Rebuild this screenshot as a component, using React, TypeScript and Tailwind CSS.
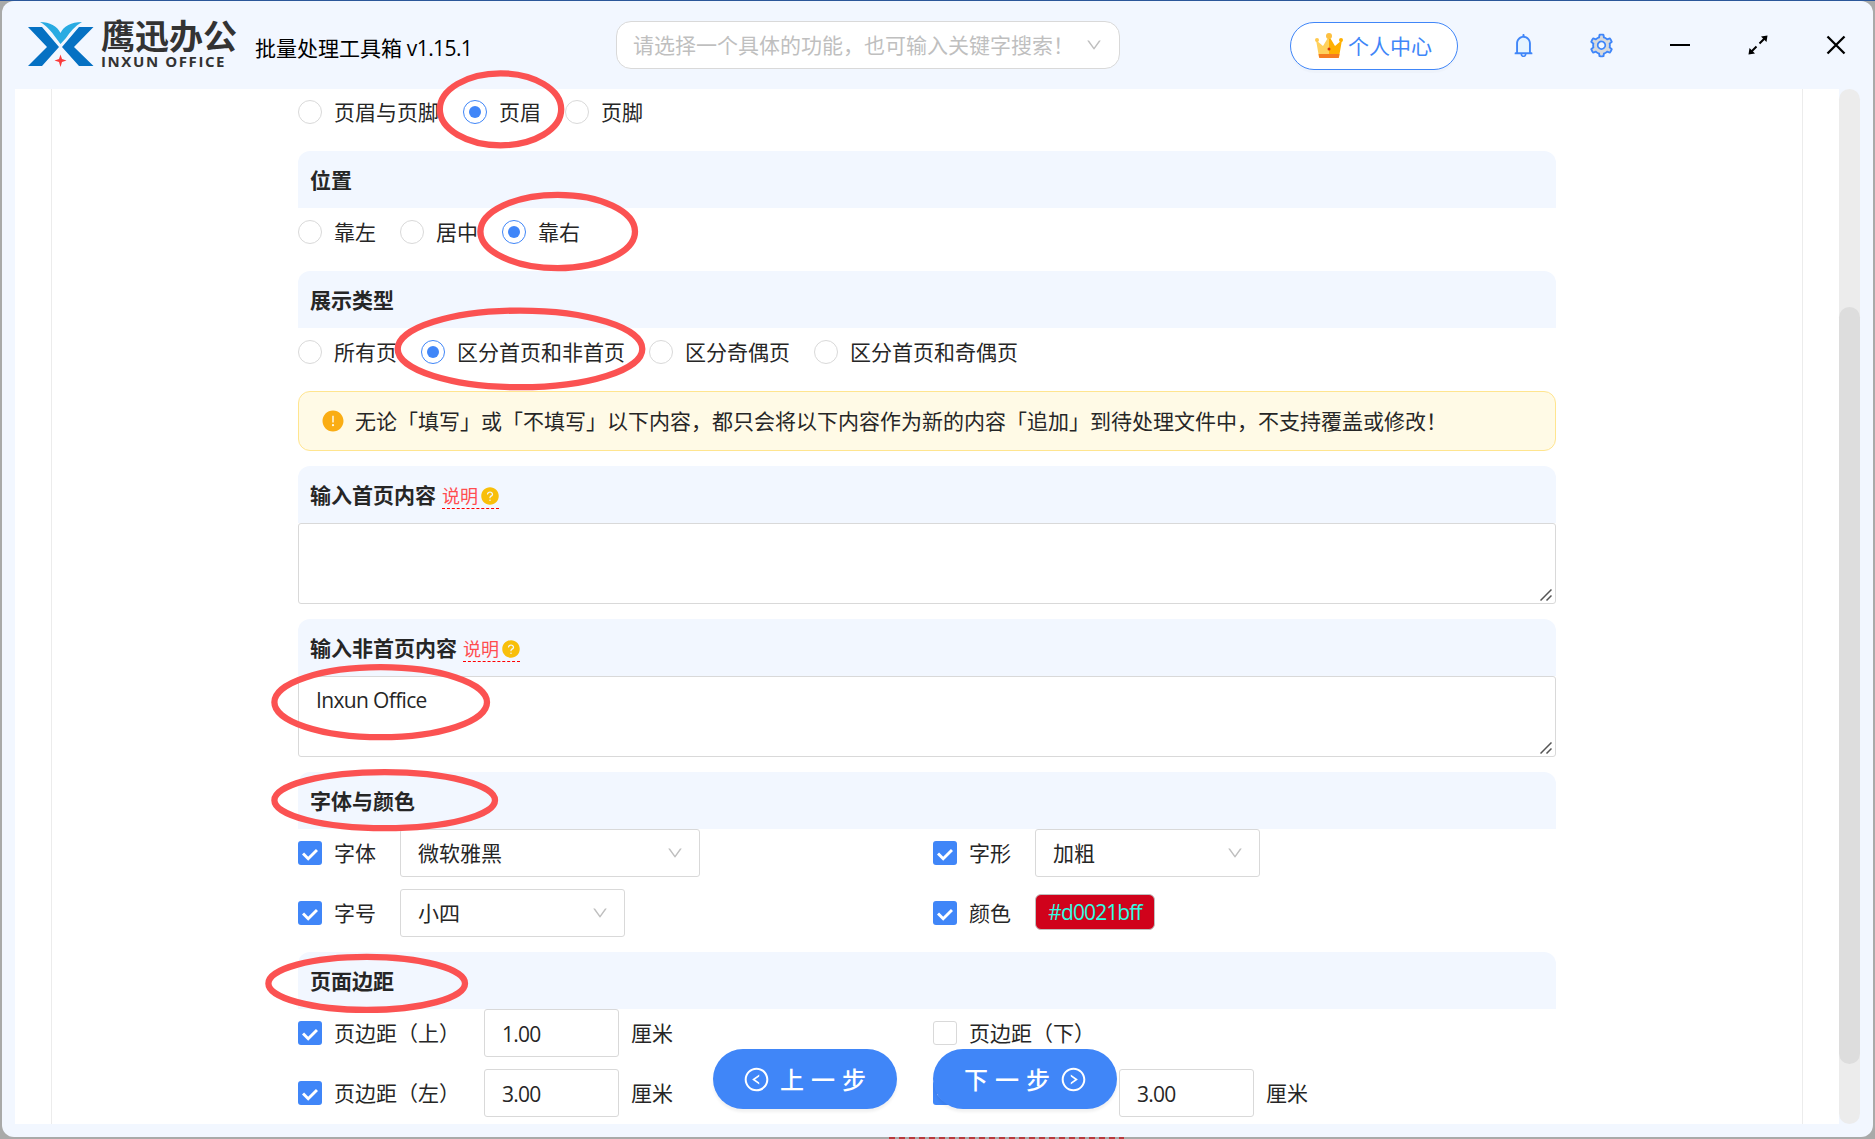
import React, { useState } from 'react';
import {
  AiFillExclamationCircle,
  AiFillQuestionCircle,
  AiOutlineDown,
  AiOutlineLeftCircle,
  AiOutlineRightCircle,
  AiTwotoneSetting,
} from 'react-icons/ai';

const Logo: React.FC = () => (
  <div className="flex w-[227px] shrink-0 items-start">
    <svg className="h-[46px] w-[66px]" viewBox="0 0 66 46">
      <path d="M0 5H14L31 25L14 44H0L19 25Z" fill="#0571c3" />
      <path d="M65.500 5H51L34 25L51 44H65.500L46 25Z" fill="#0571c3" />
      <path d="M12 0C22 0 29 4 32.500 11C36 4 43 0 54 0C47 4 42 10 38 16L32.500 22L28 16C23 9 19 4 12 0Z" fill="#29abe2" />
      <path d="M32.500 32.500L34 37L38.500 38.500L34 40L32.500 45L31 40L26.500 38.500L31 37Z" fill="#fb3b3b" />
    </svg>
    <div className="-mt-[3px] ml-[7px] flex flex-col text-[#333]">
      <span className="h-[35px] text-[34px] font-bold leading-[34px]">鹰迅办公</span>
      <span className="whitespace-nowrap font-['Open_Sans'] text-[15px] font-bold leading-[15px] tracking-[1.6px]">INXUN OFFICE</span>
    </div>
  </div>
);

const Crown: React.FC = () => (
  <svg className="h-[26px] w-[28px]" viewBox="0 0 28 26">
    <path d="M1 7L8 13L14 3V25H5Q4 25 4 24Z" fill="#ffd15c" />
    <path d="M27 7L20 13L14 3V25H23Q24 25 24 24Z" fill="#ffb000" />
    <path d="M3.600 21H24.400L24 24Q24 25 23 25H5Q4 25 4 24Z" fill="#f57c20" />
    <circle cx="14" cy="3" r="3" fill="#fdc040" />
    <circle cx="2" cy="7" r="2" fill="#ffc94d" />
    <circle cx="26" cy="7" r="2" fill="#ffb000" />
    <circle cx="14" cy="16" r="1.500" fill="#d4380d" />
  </svg>
);

const Bell: React.FC = () => (
  <svg className="size-[27px]" viewBox="0 0 1024 1024" fill="#4086f8">
    <path d="M304 768V428c0-115 93-208 208-208s208 93 208 208v340z" fill="#e6f4ff" />
    <path d="M816 768h-24V428c0-141.1-104.3-257.7-240-277.1V112c0-22.1-17.9-40-40-40s-40 17.9-40 40v38.900c-135.700 19.400-240 136-240 277.100v340h-24c-17.700 0-32 14.300-32 32v32c0 4.400 3.600 8 8 8h216c0 61.800 50.200 112 112 112s112-50.200 112-112h216c4.400 0 8-3.600 8-8v-32c0-17.700-14.300-32-32-32zM512 888c-26.500 0-48-21.500-48-48h96c0 26.500-21.500 48-48 48zM304 768V428c0-55.600 21.600-107.800 60.900-147.100S456.400 220 512 220c55.600 0 107.800 21.600 147.100 60.900S720 372.400 720 428v340H304z" />
  </svg>
);

const Header: React.FC = () => (
  <header className="flex h-[88px] shrink-0 items-center pl-[26px]">
    <Logo />
    <div className="mt-[7px] w-[361px] shrink-0 whitespace-nowrap text-black">
      批量处理工具箱<span className="tracking-[-0.6px]"> v1.15.1</span>
    </div>
    <div className="flex h-12 w-[504px] shrink-0 items-center justify-between rounded-[15px] border border-[#d9d9d9] bg-white pl-4 pr-4 text-[#bfbfbf]">
      <span className="whitespace-nowrap">请选择一个具体的功能，也可输入关键字搜索！</span>
      <AiOutlineDown size={18} />
    </div>
    <button className="ml-[170px] mt-0.5 flex h-12 w-[168px] shrink-0 items-center rounded-full border border-[#4086f8] bg-white pl-6 text-[#4086f8] shadow-[0_3px_0_rgba(0,0,0,0.015)]">
      <Crown />
      <span className="ml-[5px]">个人中心</span>
    </button>
    <div className="ml-[26px] grid grid-cols-[repeat(5,78px)] items-center justify-items-center text-black">
      <Bell />
      <AiTwotoneSetting size={27} className="text-[#4086f8]" />
      <svg className="ml-0.5 h-5 w-5" viewBox="0 0 20 20">
        <path d="M0 10H20" stroke="currentColor" strokeWidth="2" />
      </svg>
      <svg className="ml-0.5 h-5 w-5" viewBox="0 0 20 20" fill="currentColor">
        <path d="M19.500 0.500L18.500 7L13 1.500Z" />
        <path d="M0.500 19.500L1.500 13L7 18.500Z" />
        <path d="M17 3L11.500 8.500M8.500 11.500L3 17" stroke="currentColor" strokeWidth="2" />
      </svg>
      <svg className="ml-0.5 h-5 w-5" viewBox="0 0 20 20">
        <path d="M1.500 1.500L18.500 18.500M18.500 1.500L1.500 18.500" stroke="currentColor" strokeWidth="2.300" />
      </svg>
    </div>
  </header>
);

const SectionTitle: React.FC<{ title: string; help?: boolean }> = ({ title, help }) => (
  <div className="flex h-[57px] items-center rounded-t-xl bg-[#f2f7ff] px-3">
    <span className="pt-0.5 font-bold">{title}</span>
    {help && (
      <span className="relative ml-1.5 flex h-[29px] items-center gap-[3px] pt-[3px] text-[18px] text-[#ff4d4f]">
        说明
        <AiFillQuestionCircle size={20} className="-mx-px text-[#f8bf0a]" />
        <span className="absolute inset-x-0 bottom-0 border-b border-dashed border-[#f00]" />
      </span>
    )}
  </div>
);

interface RadioRowProps {
  options: string[];
  value: string;
  onChange: (value: string) => void;
}

const RadioRow: React.FC<RadioRowProps> = ({ options, value, onChange }) => (
  <div className="flex h-12 items-center gap-6">
    {options.map((option) => (
      <label key={option} className="flex items-center gap-3" onClick={() => onChange(option)}>
        {option === value ? (
          <span className="flex size-6 items-center justify-center rounded-full border border-[#4086f8]">
            <span className="size-3 rounded-full bg-[#4086f8]" />
          </span>
        ) : (
          <span className="size-6 rounded-full border border-[#d9d9d9]" />
        )}
        <span>{option}</span>
      </label>
    ))}
  </div>
);

const Check: React.FC<{ label: string; checked?: boolean }> = ({ label, checked = true }) => (
  <label className="mr-6 flex items-center gap-3 whitespace-nowrap">
    {checked ? (
      <span className="flex size-6 items-center justify-center rounded-[3px] bg-[#4086f8]">
        <svg className="mt-0.5 h-[13px] w-4" viewBox="0 0 16 13" fill="none">
          <path d="M1 5.500L6.200 10.700L15 2" stroke="#fff" strokeWidth="3" />
        </svg>
      </span>
    ) : (
      <span className="size-6 rounded-[3px] border border-[#d9d9d9] bg-white" />
    )}
    <span>{label}</span>
  </label>
);

const Select: React.FC<{ value: string; wide?: boolean }> = ({ value, wide }) => (
  <div className={`flex h-12 items-center justify-between rounded-[3px] border border-[#d9d9d9] bg-white pl-[17px] pr-[15px] ${wide ? 'w-[300px]' : 'w-[225px]'}`}>
    <span>{value}</span>
    <AiOutlineDown size={18} className="text-[#bfbfbf]" />
  </div>
);

const NumberField: React.FC<{ value: string }> = ({ value }) => (
  <>
    <div className="flex h-12 w-[135px] items-center rounded-[3px] border border-[#d9d9d9] bg-white pl-[17px] pt-[3px] tracking-[-0.8px]">{value}</div>
    <span className="ml-3">厘米</span>
  </>
);

const TextBox: React.FC<{ value?: string }> = ({ value }) => (
  <div className="relative mb-[15px] h-[81px] rounded-[3px] border border-[#d9d9d9] bg-white px-[17px] pt-[7px] leading-[33px] tracking-[-0.65px]">
    {value}
    <svg className="absolute bottom-0.5 right-[3px] size-3" viewBox="0 0 12 12">
      <path d="M0.500 11.500L11.500 0.500M6.500 11.500L11.500 6.500" stroke="#555" strokeWidth="1.500" />
    </svg>
  </div>
);

// red ovals drawn over the fields to fill in: cx, cy, rx, ry
const marks = [
  [500.5, 109.3, 60.7, 36],
  [557.7, 231.5, 77.3, 36.7],
  [520, 348.9, 122.3, 38.3],
  [380.7, 702.2, 106.3, 35],
  [384.7, 800.2, 110.3, 28],
  [366.7, 983.4, 98.3, 26.5],
];

const App: React.FC = () => {
  const [area, setArea] = useState('页眉');
  const [position, setPosition] = useState('靠右');
  const [display, setDisplay] = useState('区分首页和非首页');

  return (
    <div className="relative h-[1139px] w-[1875px] overflow-hidden border-t border-[#2b579a] bg-[#a9aaa9] px-0.5 pb-0.5 font-['Open_Sans','Noto_Sans_CJK_SC',sans-serif] text-[21px] leading-[33px] text-[#262626]">
      <div className="flex h-[1136px] flex-col rounded-[12px] bg-[#f2f7ff]">
        <Header />

        <div className="ml-[13px] flex h-[1035px]">
          <main className="w-[1824px] overflow-hidden bg-white pl-9">
            <div className="-mt-px h-[1037px] w-[1752px] border-x border-[#ececec] pl-[246px]">
              <div className="w-[1258px]">
                <div className="mb-[15px]">
                  <RadioRow options={['页眉与页脚', '页眉', '页脚']} value={area} onChange={setArea} />
                </div>

                <div className="mb-[15px]">
                  <SectionTitle title="位置" />
                  <RadioRow options={['靠左', '居中', '靠右']} value={position} onChange={setPosition} />
                </div>

                <div className="mb-[15px]">
                  <SectionTitle title="展示类型" />
                  <RadioRow options={['所有页', '区分首页和非首页', '区分奇偶页', '区分首页和奇偶页']} value={display} onChange={setDisplay} />
                </div>

                <div className="mb-[15px] flex h-[60px] items-center rounded-xl border border-[#ffe58f] bg-[#fffae6] pl-[22px]">
                  <AiFillExclamationCircle size={24} className="text-[#faad14]" />
                  <span className="ml-2.5 whitespace-nowrap">
                    无论「填写」或「不填写」以下内容，都只会将以下内容作为新的内容「追加」到待处理文件中，不支持覆盖或修改！
                  </span>
                </div>

                <SectionTitle title="输入首页内容" help />
                <TextBox />

                <SectionTitle title="输入非首页内容" help />
                <TextBox value="Inxun Office" />

                {/* Font and colour */}
                <SectionTitle title="字体与颜色" />
                <div className="mb-[15px] grid grid-cols-2 gap-3">
                  <div className="flex h-12 items-center">
                    <Check label="字体" />
                    <Select value="微软雅黑" wide />
                  </div>
                  <div className="flex h-12 items-center">
                    <Check label="字形" />
                    <Select value="加粗" />
                  </div>
                  <div className="flex h-12 items-center">
                    <Check label="字号" />
                    <Select value="小四" />
                  </div>
                  <div className="flex h-12 items-center">
                    <Check label="颜色" />
                    <span className="mb-0.5 flex h-9 w-[120px] items-center justify-center rounded-md border border-[#bfbfbf] bg-[#d0021b] tracking-[-0.9px] text-[#2ffde4]">#d0021bff</span>
                  </div>
                </div>

                {/* Page margins */}
                <SectionTitle title="页面边距" />
                <div className="grid grid-cols-2 gap-3">
                  <div className="flex h-12 items-center">
                    <Check label="页边距（上）" />
                    <NumberField value="1.00" />
                  </div>
                  <div className="flex h-12 items-center">
                    <Check label="页边距（下）" checked={false} />
                  </div>
                  <div className="flex h-12 items-center">
                    <Check label="页边距（左）" />
                    <NumberField value="3.00" />
                  </div>
                  <div className="flex h-12 items-center">
                    <Check label="页边距（右）" />
                    <NumberField value="3.00" />
                  </div>
                </div>
              </div>
            </div>
          </main>

          {/* Scrollbar */}
          <div className="w-[21px] rounded-full bg-[#ececec] pt-[218px]">
            <div className="h-[757px] rounded-full bg-[#ddd]" />
          </div>
        </div>
      </div>

      {/* Floating step buttons */}
      <div className="absolute left-[713px] top-[1048px] flex gap-9 text-[24px] font-medium text-white">
        <button className="flex h-[60px] w-[184px] items-center rounded-full bg-[#4086f8] pl-[30px] shadow-[0_3px_3px_rgba(0,0,0,0.06)]">
          <AiOutlineLeftCircle size={27} />
          <span className="ml-2.5 whitespace-nowrap tracking-[7px]">上一步</span>
        </button>
        <button className="flex h-[60px] w-[184px] items-center rounded-full bg-[#4086f8] pl-[31px] shadow-[0_3px_3px_rgba(0,0,0,0.06)]">
          <span className="whitespace-nowrap tracking-[7px]">下一步</span>
          <AiOutlineRightCircle size={27} className="ml-[3px]" />
        </button>
      </div>

      <svg className="pointer-events-none absolute left-0 -top-px h-[1139px] w-[1875px]" viewBox="0 0 1875 1139" fill="none">
        {marks.map(([cx, cy, rx, ry]) => (
          <ellipse key={cy} cx={cx} cy={cy} rx={rx} ry={ry} stroke="#fb5252" strokeWidth="6.300" />
        ))}
        <path d="M889 1138H1124" stroke="#b8393d" strokeWidth="2" strokeDasharray="6 4" />
      </svg>
    </div>
  );
};

export default App;
